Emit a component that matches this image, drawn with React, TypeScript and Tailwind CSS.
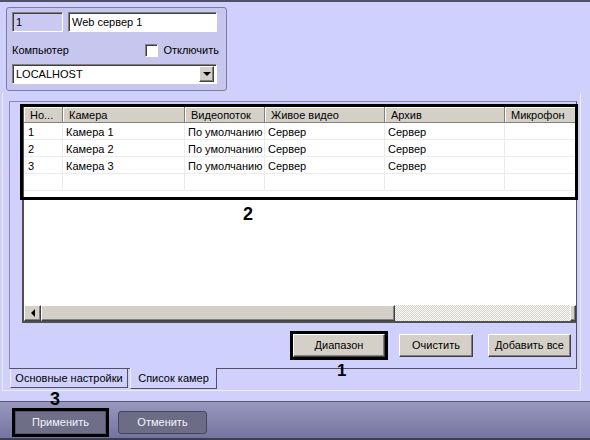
import React from 'react'

const cols = [
  { title: 'Но...', w: 'w-[39px]' },
  { title: 'Камера', w: 'w-[122px]' },
  { title: 'Видеопоток', w: 'w-[80px]' },
  { title: 'Живое видео', w: 'w-[120px]' },
  { title: 'Архив', w: 'w-[120px]' },
  { title: 'Микрофон', w: 'w-[75px]' },
]

const rows = [
  ['1', 'Камера 1', 'По умолчанию', 'Сервер', 'Сервер', ''],
  ['2', 'Камера 2', 'По умолчанию', 'Сервер', 'Сервер', ''],
  ['3', 'Камера 3', 'По умолчанию', 'Сервер', 'Сервер', ''],
  ['', '', '', '', '', ''],
]

const raised =
  'bg-[#d4d0c8] border border-t-white border-l-white border-r-[#404040] border-b-[#404040] shadow-[inset_-1px_-1px_0_#808080]'
const sunken =
  'border border-t-[#808080] border-l-[#808080] border-r-white border-b-white shadow-[inset_1px_1px_0_#404040]'

const GrayButton = ({ label, w }: { label: string; w: string }) => (
  <div className={`${raised} ${w} h-[23px] flex items-center justify-center`}>{label}</div>
)

export default function App() {
  return (
    <div className="relative w-[590px] h-[440px] overflow-hidden bg-[#d0d0fc] text-[11px] text-black font-['Liberation_Sans',Arial,sans-serif] flex flex-col">
      {/* window top edge */}
      <div className="h-[2px] bg-[#50506a]" />

      {/* server group */}
      <div className="mt-[5px] ml-[6px] w-[221px] h-[84px] rounded-[3px] border border-[#7c7ca0] bg-[#c6c6ee] px-[5px] pt-[4px]">
        <div className="flex gap-[5px] h-[20px]">
          <div className={`${sunken} w-[51px] bg-[#c9c9f1] flex items-center pl-[3px]`}>1</div>
          <div className={`${sunken} w-[149px] bg-white flex items-center pl-[3px]`}>Web сервер 1</div>
        </div>
        <div className="mt-[11px] h-[14px] flex items-center justify-between pr-[2px]">
          <span>Компьютер</span>
          <div className="flex items-center gap-[5px]">
            <div className={`${sunken} w-[13px] h-[13px] bg-white`} />
            <span>Отключить</span>
          </div>
        </div>
        <div className={`${sunken} mt-[7px] w-[205px] h-[20px] bg-white flex items-center justify-between pl-[3px] pr-[2px]`}>
          <span>LOCALHOST</span>
          <div className={`${raised} w-[15px] h-[16px] flex items-center justify-center`}>
            <div className="w-0 h-0 border-l-[4px] border-r-[4px] border-t-[4px] border-l-transparent border-r-transparent border-t-black" />
          </div>
        </div>
      </div>

      {/* tab control */}
      <div className="mt-[2px] ml-[2px] w-[579px] border-l border-r border-b border-[#eeeeff] pt-[8px]">
        <div className="ml-[6px] w-[568px] h-[268px] border border-t-[#8a8aa6] border-l-[#8a8aa6] border-r-[#505068] border-b-[#505068] flex flex-col">
          {/* list view */}
          <div className="mt-[3px] ml-[12px] w-[554px] h-[218px] bg-white border-l-2 border-t-2 border-b-2 border-[#505050] flex flex-col overflow-hidden">
            <div className="flex h-[16px] shrink-0">
              {cols.map((c) => (
                <div
                  key={c.title}
                  className={`${c.w} shrink-0 bg-[#d4d0c8] border-r border-b border-[#808080] shadow-[inset_1px_1px_0_#fff] pl-[6px] pt-[1px] flex items-center whitespace-nowrap overflow-hidden`}
                >
                  {c.title}
                </div>
              ))}
            </div>
            {rows.map((r, i) => (
              <div key={i} className="flex h-[17px] shrink-0">
                {r.map((cell, j) => (
                  <div
                    key={j}
                    className={`${cols[j].w} shrink-0 border-r border-b border-[#ececec] ${j === 0 ? 'pl-[4px]' : 'pl-[3px]'} pt-[2px] flex items-center whitespace-nowrap overflow-hidden`}
                  >
                    {cell}
                  </div>
                ))}
              </div>
            ))}
            <div className="flex-1" />
            {/* horizontal scrollbar */}
            <div className="flex h-[16px] shrink-0">
              <div className={`${raised} w-[17px] flex items-center justify-center`}>
                <div className="w-0 h-0 border-t-[4px] border-b-[4px] border-r-[4px] border-t-transparent border-b-transparent border-r-black" />
              </div>
              <div className={`${raised} w-[354px]`} />
              <div className="w-[175px] bg-[repeating-conic-gradient(#d4d0c8_0%_25%,#ffffff_0%_50%)] bg-[length:2px_2px]" />
              <div className={`${raised} w-[6px]`} />
            </div>
          </div>

          {/* buttons */}
          <div className="mt-[9px] h-[26px] flex items-center justify-end pr-[5px]">
            <div className="border-[3px] border-black">
              <GrayButton label="Диапазон" w="w-[92px]" />
            </div>
            <div className="ml-[11px]">
              <GrayButton label="Очистить" w="w-[74px]" />
            </div>
            <div className="ml-[15px]">
              <GrayButton label="Добавить все" w="w-[83px]" />
            </div>
          </div>
        </div>

        {/* tabs */}
        <div className="h-[21px] flex items-start ml-[7px]">
          <div className="w-[118px] h-[19px] border-l border-b border-r border-l-[#f0f0ff] border-b-[#505068] border-r-[#505068] flex items-center justify-center">
            Основные настройки
          </div>
          <div className="relative -mt-[1px] ml-[2px] w-[87px] h-[21px] bg-[#d0d0fc] border-l border-b border-r border-l-[#f0f0ff] border-b-[#505068] border-r-[#505068] flex items-center justify-center">
            Список камер
          </div>
        </div>
      </div>

      {/* bottom bar */}
      <div className="mt-[10px] h-[39px] border-t border-b-2 border-t-[#5a5a78] border-b-[#3c3c50] bg-linear-to-b from-[#9898be] to-[#7474a2] pt-[6px] pl-[12px] flex items-start">
        <div className="border-[3px] border-black">
          <div className="w-[91px] h-[23px] bg-[#6e6e88] border border-[#55556c] text-[#f4f4ff] flex items-center justify-center">
            Применить
          </div>
        </div>
        <div className="ml-[9px] mt-[3px] w-[89px] h-[23px] rounded-[3px] bg-[#6c6c86] border border-[#45455a] text-[#f4f4ff] flex items-center justify-center">
          Отменить
        </div>
      </div>

      {/* annotations */}
      <div className="absolute left-[20px] top-[104px] w-[558px] h-[96px] border-[3px] border-black pointer-events-none" />
      <div className="absolute left-[243px] top-[205px] text-[18px] leading-[18px] font-bold">2</div>
      <div className="absolute left-[337px] top-[362px] text-[17px] leading-[17px] font-bold">1</div>
      <div className="absolute left-[50px] top-[390px] text-[18px] leading-[18px] font-bold">3</div>
    </div>
  )
}
